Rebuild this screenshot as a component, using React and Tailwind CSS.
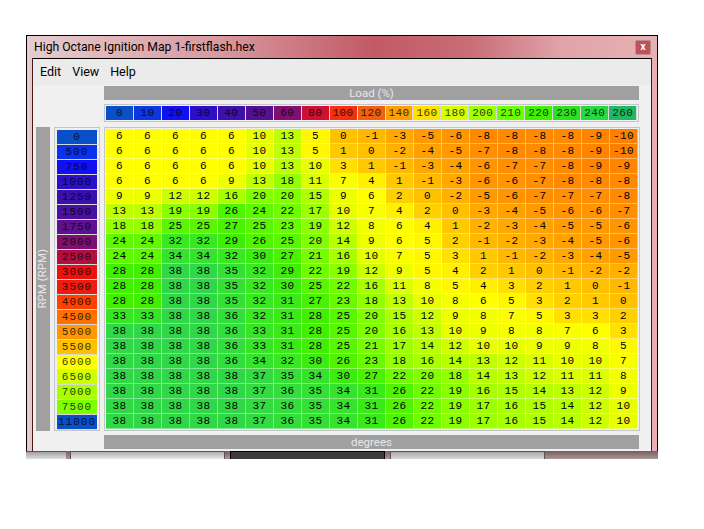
import React from 'react';

const LOAD = [
  ['0', '#0a4fc8'], ['10', '#0a38dc'], ['20', '#1010f0'], ['30', '#2a10c8'], ['40', '#3f10a8'],
  ['50', '#551090'], ['60', '#7f1070'], ['80', '#d01030'], ['100', '#f43010'], ['120', '#f06010'],
  ['140', '#ffa000'], ['160', '#ffe000'], ['180', '#d8ff00'], ['200', '#a0ff00'], ['210', '#70ff00'],
  ['220', '#40f000'], ['230', '#30e020'], ['240', '#28d840'], ['260', '#20b860'],
];

const RPM = [
  ['0', '#0a4fc8'], ['500', '#0a30f0'], ['750', '#1010f0'], ['1000', '#2a10c8'], ['1250', '#3a10b0'],
  ['1500', '#4a10a0'], ['1750', '#5f1090'], ['2000', '#7f1070'], ['2500', '#b01040'], ['3000', '#ee1010'],
  ['3500', '#ee1c10'], ['4000', '#ff4000'], ['4500', '#ff7000'], ['5000', '#ff9800'], ['5500', '#ffc000'],
  ['6000', '#ffff00'], ['6500', '#d0ff00'], ['7000', '#a8ff00'], ['7500', '#80ff00'], ['11000', '#0a4fc8'],
];

const MAP = [
  [6, 6, 6, 6, 6, 10, 13, 5, 0, -1, -3, -5, -6, -8, -8, -8, -8, -9, -10],
  [6, 6, 6, 6, 6, 10, 13, 5, 1, 0, -2, -4, -5, -7, -8, -8, -8, -9, -10],
  [6, 6, 6, 6, 6, 10, 13, 10, 3, 1, -1, -3, -4, -6, -7, -7, -8, -9, -9],
  [6, 6, 6, 6, 9, 13, 18, 11, 7, 4, 1, -1, -3, -6, -6, -7, -8, -8, -8],
  [9, 9, 12, 12, 16, 20, 20, 15, 9, 6, 2, 0, -2, -5, -6, -7, -7, -7, -8],
  [13, 13, 19, 19, 26, 24, 22, 17, 10, 7, 4, 2, 0, -3, -4, -5, -6, -6, -7],
  [18, 18, 25, 25, 27, 25, 23, 19, 12, 8, 6, 4, 1, -2, -3, -4, -5, -5, -6],
  [24, 24, 32, 32, 29, 26, 25, 20, 14, 9, 6, 5, 2, -1, -2, -3, -4, -5, -6],
  [24, 24, 34, 34, 32, 30, 27, 21, 16, 10, 7, 5, 3, 1, -1, -2, -3, -4, -5],
  [28, 28, 38, 38, 35, 32, 29, 22, 19, 12, 9, 5, 4, 2, 1, 0, -1, -2, -2],
  [28, 28, 38, 38, 35, 32, 30, 25, 22, 16, 11, 8, 5, 4, 3, 2, 1, 0, -1],
  [28, 28, 38, 38, 35, 32, 31, 27, 23, 18, 13, 10, 8, 6, 5, 3, 2, 1, 0],
  [33, 33, 38, 38, 36, 32, 31, 28, 25, 20, 15, 12, 9, 8, 7, 5, 3, 3, 2],
  [38, 38, 38, 38, 36, 33, 31, 28, 25, 20, 16, 13, 10, 9, 8, 8, 7, 6, 3],
  [38, 38, 38, 38, 36, 33, 31, 28, 25, 21, 17, 14, 12, 10, 10, 9, 9, 8, 5],
  [38, 38, 38, 38, 36, 34, 32, 30, 26, 23, 18, 16, 14, 13, 12, 11, 10, 10, 7],
  [38, 38, 38, 38, 38, 37, 35, 34, 30, 27, 22, 20, 18, 14, 13, 12, 11, 11, 8],
  [38, 38, 38, 38, 38, 37, 36, 35, 34, 31, 26, 22, 19, 16, 15, 14, 13, 12, 9],
  [38, 38, 38, 38, 38, 37, 36, 35, 34, 31, 26, 22, 19, 17, 16, 15, 14, 12, 10],
  [38, 38, 38, 38, 38, 37, 36, 35, 34, 31, 26, 22, 19, 17, 16, 15, 14, 12, 10],
];

// value -> colour stops, sampled from the map
const STOPS = [
  [-10, [255, 128, 0]], [-8, [255, 138, 0]], [-5, [255, 154, 0]], [-3, [255, 168, 0]], [0, [255, 192, 0]],
  [2, [255, 208, 0]], [4, [255, 240, 0]], [6, [255, 255, 0]], [10, [232, 255, 0]], [13, [192, 255, 0]],
  [16, [168, 255, 0]], [20, [128, 255, 0]], [24, [96, 248, 0]], [28, [64, 240, 0]], [32, [56, 232, 32]],
  [38, [48, 216, 72]],
];

const cellColor = (v) => {
  for (let i = 1; i < STOPS.length; i++) {
    const [hi, b] = STOPS[i];
    if (v <= hi) {
      const [lo, a] = STOPS[i - 1];
      const t = (v - lo) / (hi - lo);
      return `rgb(${a.map((c, k) => Math.round(c + (b[k] - c) * t)).join(',')})`;
    }
  }
  return 'rgb(48,216,72)';
};

const Bar = ({ children }) => (
  <div className="h-[14px] bg-[#a0a0a0] text-[#e8e8e8] text-[11.5px] leading-[14px] text-center">{children}</div>
);

const App = () => {
  return (
    <div className="w-[704px] h-[529px] bg-white overflow-hidden pt-[35px] pl-[26px] font-['Roboto',sans-serif]">
      {/* Window */}
      <div className="w-[632px] h-[416px] border-x border-t border-black bg-[linear-gradient(90deg,#e6ccce_0%,#d89aa0_30%,#c25a66_55%,#c86c76_70%,#e0a4aa_85%,#e8b0b4_100%)] flex flex-col">
        {/* Title bar */}
        <div className="h-[22px] shrink-0 flex items-center justify-between pl-[7px] pr-[6px]">
          <span className="text-[12.2px] leading-[22px] text-black">High Octane Ignition Map 1-firstflash.hex</span>
          <div className="w-[16px] h-[15px] rounded-[2px] border border-[#b09090] bg-[#c0505a] flex items-center justify-center text-white text-[10px] leading-none font-bold">
            x
          </div>
        </div>

        {/* Client area */}
        <div className="flex-1 mx-[5px] border border-b-0 border-t-black border-x-[#4a1a1a] bg-[#f0f0f0] min-h-0">
          <div className="h-[26px] bg-[#ebebeb] flex items-center pl-[7px] gap-[11px] text-[12.5px] text-black">
            <span>Edit</span>
            <span>View</span>
            <span>Help</span>
          </div>

          <div className="pl-[71px] pr-[12px] mt-[1px]">
            <Bar>Load (%)</Bar>
            <div className="mt-[4px] h-[18px] border border-[#c4c4cc] p-px flex">
              {LOAD.map(([label, color]) => (
                <div
                  key={label}
                  className="w-[28px] h-[14px] border-r border-[#d8d8d8] text-center text-[11px] tracking-[0.4px] leading-[14px] font-['Liberation_Mono',monospace] text-black/80"
                  style={{ backgroundColor: color }}
                >
                  {label}
                </div>
              ))}
            </div>
          </div>

          <div className="flex mt-[5px] pl-[3px]">
            <div className="w-[14px] h-[304px] bg-[#a0a0a0] flex items-center justify-center">
              <span className="[writing-mode:vertical-rl] rotate-180 text-[11.5px] text-[#e8e8e8] leading-none">RPM (RPM)</span>
            </div>
            <div className="ml-[4px] w-[46px] h-[304px] border border-[#c4c4cc] p-[2px]">
              {RPM.map(([label, color]) => (
                <div
                  key={label}
                  className="h-[15px] border-b border-[#d8d8d8] text-center text-[11px] tracking-[1px] leading-[14px] font-['Liberation_Mono',monospace] text-black/80"
                  style={{ backgroundColor: color }}
                >
                  {label}
                </div>
              ))}
            </div>
            <div className="ml-[4px] w-[536px] h-[304px] border border-[#c4c4cc] p-px">
              {MAP.map((row, r) => (
                <div key={r} className="flex">
                  {row.map((v, c) => (
                    <div
                      key={c}
                      className="w-[28px] h-[15px] border-r border-b border-white/40 text-center text-[11px] tracking-[0.4px] leading-[14px] font-['Liberation_Mono',monospace] text-black"
                      style={{ backgroundColor: cellColor(v) }}
                    >
                      {v}
                    </div>
                  ))}
                </div>
              ))}
            </div>
          </div>

          <div className="pl-[71px] pr-[12px] mt-[4px]">
            <Bar>degrees</Bar>
          </div>
        </div>
      </div>

      {/* Taskbar strip under the window */}
      <div className="w-[632px] h-[8px] flex bg-[linear-gradient(180deg,#7a5a5a,#a89898)]">
        <div className="w-[40px] border-t border-[#555] bg-[linear-gradient(180deg,#a0a0a0,#e0e0e0)]"></div>
        <div className="w-[155px] ml-[4px] border border-b-0 border-[#555] bg-[linear-gradient(180deg,#b0b0b0,#e8e8e8)]"></div>
        <div className="w-[155px] ml-[5px] border border-b-0 border-black bg-[#3c3c3c]"></div>
        <div className="w-[155px] ml-[5px] border border-b-0 border-[#555] bg-[linear-gradient(180deg,#a8a8a8,#d8d8d8)]"></div>
      </div>
    </div>
  );
};

export default App;
